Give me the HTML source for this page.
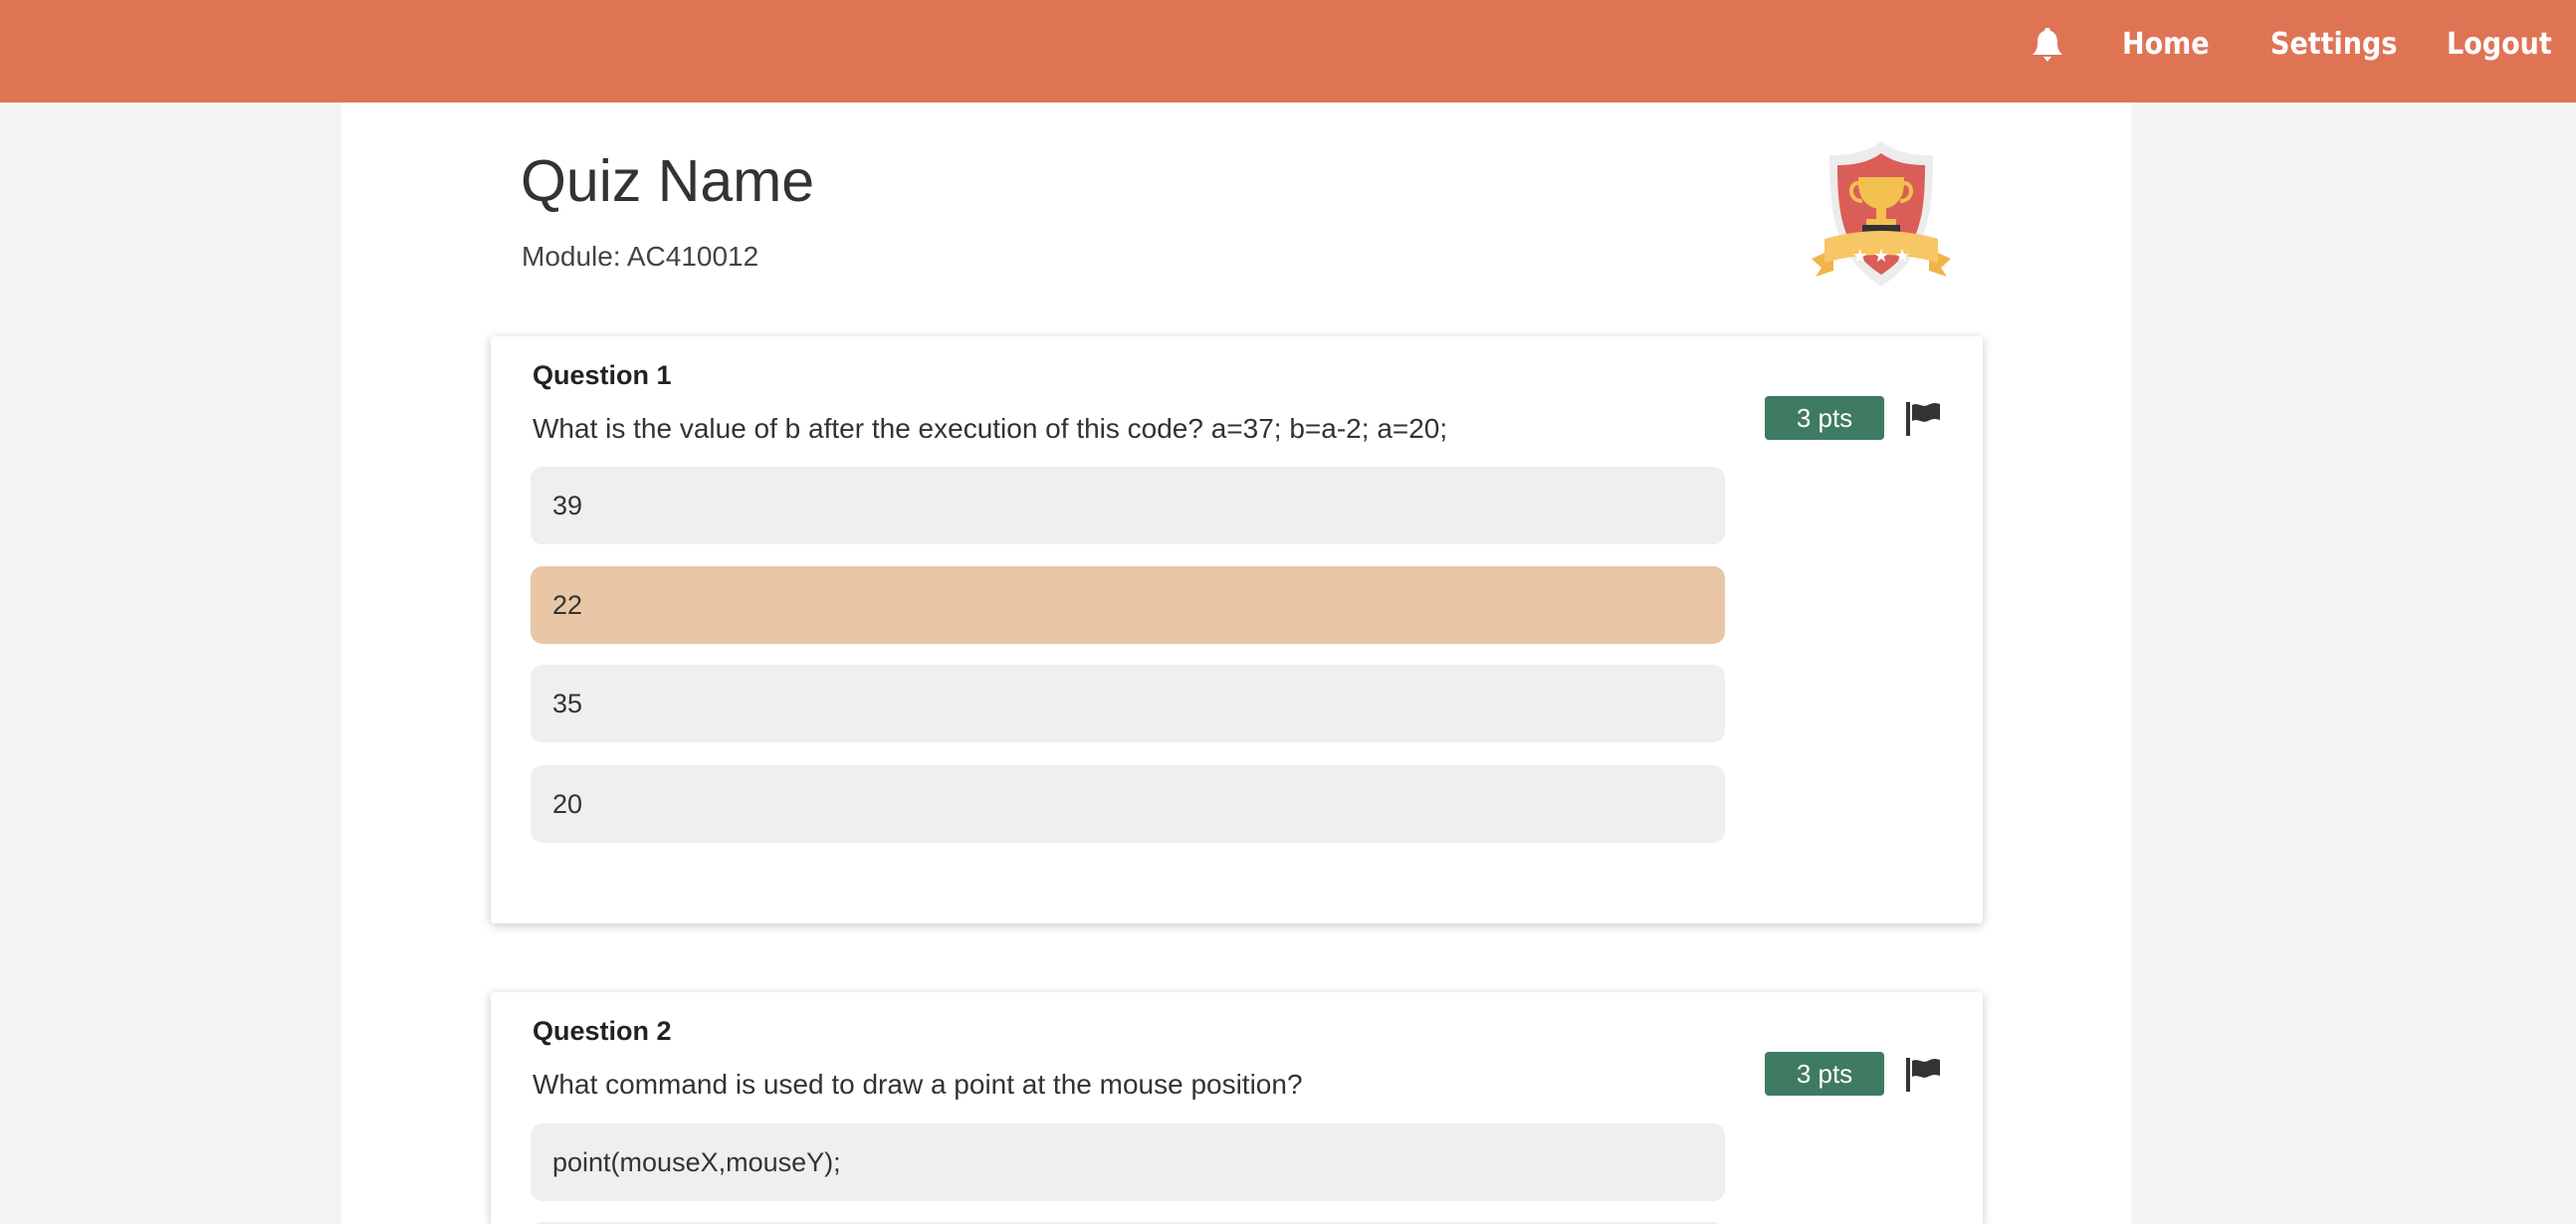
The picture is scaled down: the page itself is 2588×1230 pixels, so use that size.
<!DOCTYPE html>
<html><head><meta charset="utf-8"><style>
*{margin:0;padding:0;box-sizing:border-box}
html,body{width:2588px;height:1230px;overflow:hidden}
body{background:#f4f4f4;font-family:"Liberation Sans",sans-serif;color:#333;position:relative}
.hdr{position:absolute;left:0;top:0;width:2588px;height:103px;background:#df7455}
.nav{position:absolute;top:27px;color:#fff;font-weight:bold;font-size:30px;font-family:"DejaVu Sans Condensed","Liberation Sans",sans-serif}
.main{position:absolute;left:343px;top:103px;width:1798px;height:1127px;background:#fff}
.abs{position:absolute}
.card{position:absolute;left:493px;width:1499px;background:#fff;border-radius:4px;box-shadow:0 2px 10px rgba(0,0,0,.22);overflow:hidden}
.q{position:absolute;left:42px;font-weight:bold;font-size:27px;color:#222}
.qt{position:absolute;left:42px;font-size:28px;color:#333}
.opt{position:absolute;left:40px;width:1200px;height:78px;background:#f0eeee;border-radius:12px;font-size:27px;line-height:78px;padding-left:22px;color:#333}
.sel{background:#e8c6a6}
.pts{position:absolute;left:1280px;width:120px;height:44px;background:#3f7a62;color:#fff;border-radius:4px;font-size:26px;text-align:center;line-height:44px}
.flag{position:absolute;left:1422px}
</style></head><body>
<div class="hdr">
<svg class="abs" style="left:2040px;top:26px" width="34" height="38" viewBox="0 0 34 38"><path d="M17 2c-2 0-3 1-3 3C8 7 7 12 7 18c0 5-2 8-5 11h30c-3-3-5-6-5-11 0-6-1-11-7-13 0-2-1-3-3-3z" fill="#fff"/><path d="M13 31h8l-4 5z" fill="#fff"/></svg>
<div class="nav" style="left:2132px">Home</div>
<div class="nav" style="left:2281px">Settings</div>
<div class="nav" style="left:2458px">Logout</div>
</div>
<div class="main"></div>
<div class="abs" style="left:523px;top:148px;font-size:59px;color:#333">Quiz Name</div>
<div class="abs" style="left:524px;top:242px;font-size:28px;color:#444">Module: AC410012</div>
<svg class="abs" style="left:1815px;top:140px" width="150" height="150" viewBox="0 0 150 150">
<path d="M75 2c-10 8-25 14-52 14 0 60 5 100 52 132 47-32 52-72 52-132C100 16 85 10 75 2z" fill="#ececec"/>
<path d="M75 14c-10 7-22 12-44 12 0 50 5 85 44 110 39-25 44-60 44-110-22 0-34-5-44-12z" fill="#db5d58"/>
<path d="M52 38h46v6c0 16-10 26-23 26S52 60 52 44z" fill="#f2c14e"/>
<path d="M52 44c-10 0-10 18 4 18M98 44c10 0 10 18-4 18" stroke="#f2c14e" stroke-width="4" fill="none"/>
<rect x="70" y="68" width="10" height="14" fill="#f2c14e"/><rect x="60" y="80" width="30" height="6" fill="#f2c14e"/>
<rect x="56" y="86" width="38" height="12" fill="#333"/>
<path d="M5 120l22-10 0 22-18 6 6-9z M145 120l-22-10 0 22 18 6-6-9z" fill="#f0b44a"/>
<path d="M18 100q57-16 114 0v24q-57-16-114 0z" fill="#f7c765"/>
<text x="75" y="123" text-anchor="middle" font-size="18" fill="#fff">★ ★ ★</text>
</svg>
<div class="card" style="top:338px;height:590px">
<div class="q" style="top:24px">Question 1</div>
<div class="qt" style="top:77px">What is the value of b after the execution of this code? a=37; b=a-2; a=20;</div>
<div class="opt" style="top:131px">39</div>
<div class="opt sel" style="top:231px">22</div>
<div class="opt" style="top:330px">35</div>
<div class="opt" style="top:431px">20</div>
<div class="pts" style="top:60px">3 pts</div>
<svg class="flag" style="top:66px" width="40" height="34" viewBox="0 0 40 34"><rect x="0" y="0" width="4" height="34" fill="#333"/><path d="M6 3c6-3 10 3 16 0s8-2 12-1v16c-4-1-6-2-12 1s-10-3-16 0z" fill="#333"/></svg>
</div>
<div class="card" style="top:997px;height:233px;border-radius:4px 4px 0 0">
<div class="q" style="top:24px">Question 2</div>
<div class="qt" style="top:77px">What command is used to draw a point at the mouse position?</div>
<div class="opt" style="top:132px">point(mouseX,mouseY);</div>
<div class="opt" style="top:231px"></div>
<div class="pts" style="top:60px">3 pts</div>
<svg class="flag" style="top:66px" width="40" height="34" viewBox="0 0 40 34"><rect x="0" y="0" width="4" height="34" fill="#333"/><path d="M6 3c6-3 10 3 16 0s8-2 12-1v16c-4-1-6-2-12 1s-10-3-16 0z" fill="#333"/></svg>
</div>
</body></html>
